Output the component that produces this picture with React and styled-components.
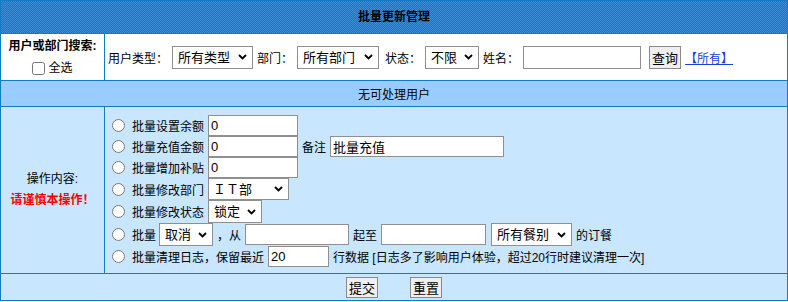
import React from 'react';
import styled, { createGlobalStyle } from 'styled-components';

const GlobalStyle = createGlobalStyle`
  html, body {
    margin: 0;
    padding: 0;
    background: #ffffff;
  }
  body {
    font-family: 'Liberation Sans', 'Noto Sans CJK SC', sans-serif;
    font-size: 12px;
    color: #000;
  }
`;

const BLUE = '#0f7cc4';

const Panel = styled.div`
  width: 788px;
  box-sizing: border-box;
  border: 1px solid ${BLUE};
`;

const Header = styled.div`
  height: 32px;
  line-height: 32px;
  text-align: center;
  font-weight: 700;
  background-color: #2f7fc8;
  background-image: repeating-conic-gradient(#2673bd 0% 25%, #3b8cd4 0% 50%);
  background-size: 2px 2px;
`;

const Row = styled.div`
  display: grid;
  grid-template-columns: 104px 1fr;
  border-top: 1px solid ${BLUE};
  height: ${(p) => p.h}px;
  background: ${(p) => p.bg || '#ffffff'};
`;

const LeftCell = styled.div`
  border-right: 1px solid ${BLUE};
  display: flex;
  flex-direction: column;
  align-items: center;
  justify-content: center;
  line-height: ${(p) => p.lh || 21}px;
  .title {
    font-weight: 700;
  }
  .danger {
    color: #ff0000;
    font-weight: 700;
  }
  label {
    display: flex;
    align-items: center;
  }
  input {
    width: 13px;
    height: 13px;
    margin: 0 3px 0 0;
  }
`;

const RightCell = styled.div`
  display: flex;
  align-items: center;
  padding-left: 3px;
`;

const FullRow = styled.div`
  border-top: 1px solid ${BLUE};
  height: ${(p) => p.h}px;
  background: ${(p) => p.bg};
  display: flex;
  align-items: center;
  justify-content: center;
  gap: ${(p) => p.gap || 0}px;
`;

const OpsList = styled.div`
  display: flex;
  flex-direction: column;
  justify-content: center;
  padding-left: 7px;
  padding-top: 2px;
`;

const OpRow = styled.div`
  display: flex;
  align-items: center;
  min-height: ${(p) => p.h || 21}px;
  white-space: nowrap;
`;

const Radio = styled.input.attrs({ type: 'radio', name: 'op' })`
  width: 13px;
  height: 13px;
  margin: 0 7px 0 0;
`;

const TextInput = styled.input.attrs({ type: 'text' })`
  box-sizing: border-box;
  width: ${(p) => p.w}px;
  height: ${(p) => p.hgt || 21}px;
  margin: 0 4px;
  padding: 0 2px;
  border: 1px solid #8f8f8f;
  border-radius: 0;
  background: #ffffff;
  font-family: 'Liberation Sans', 'Noto Sans CJK SC', sans-serif;
  font-size: 13px;
  color: #000;
  outline: none;
`;

const SelectWrap = styled.span`
  position: relative;
  display: inline-flex;
  margin: 0 4px 0 ${(p) => (p.ml === undefined ? 4 : p.ml)}px;
  width: ${(p) => p.w}px;
  height: ${(p) => p.hgt || 23}px;
  svg {
    position: absolute;
    right: 6px;
    top: 50%;
    transform: translateY(-50%);
    pointer-events: none;
  }
`;

const NativeSelect = styled.select`
  appearance: none;
  -webkit-appearance: none;
  box-sizing: border-box;
  width: 100%;
  height: 100%;
  padding: 0 0 0 ${(p) => p.pl || 5}px;
  border: 1px solid #8f8f8f;
  border-radius: 0;
  background: #ffffff;
  font-family: 'Liberation Sans', 'Noto Sans CJK SC', sans-serif;
  font-size: 13px;
  color: #000;
  outline: none;
`;

const Btn = styled.button`
  box-sizing: border-box;
  height: ${(p) => p.hgt || 22}px;
  padding: 0 2px;
  margin: 0 4px;
  border: 1px solid #8a8a8a;
  border-radius: 0;
  background: #efefef;
  font-family: 'Liberation Sans', 'Noto Sans CJK SC', sans-serif;
  font-size: 13px;
  color: #000;
`;

const AllLink = styled.a`
  color: #1a40d8;
  text-decoration: underline;
`;

const Gap = styled.span`
  display: inline-block;
  width: ${(p) => p.w}px;
`;

const Select = ({ w, hgt, pl, ml, children }) => (
  <SelectWrap w={w} hgt={hgt} ml={ml}>
    <NativeSelect pl={pl} defaultValue={children}>
      <option>{children}</option>
    </NativeSelect>
    <svg width="9" height="6" viewBox="0 0 9 6">
      <path d="M1 1 L4.5 4.5 L8 1" fill="none" stroke="#000" strokeWidth="1.8" />
    </svg>
  </SelectWrap>
);

export default function App() {
  return (
    <>
      <GlobalStyle />
      <Panel>
        <Header>批量更新管理</Header>

        <Row h={46}>
          <LeftCell lh={22}>
            <span className="title">用户或部门搜索:</span>
            <label>
              <input type="checkbox" />
              全选
            </label>
          </LeftCell>
          <RightCell>
            用户类型：
            <Select w={81}>所有类型</Select>
            部门：
            <Select w={82}>所有部门</Select>
            <Gap w={2} />
            状态：
            <Select w={54}>不限</Select>
            姓名：
            <TextInput w={118} hgt={23} />
            <Btn hgt={23}>查询</Btn>
            <AllLink href="#">【所有】</AllLink>
          </RightCell>
        </Row>

        <FullRow h={25} bg="#99ccff">无可处理用户</FullRow>

        <Row h={166} bg="#c8e6fd">
          <LeftCell lh={21}>
            <span>操作内容:</span>
            <span className="danger">请谨慎本操作！</span>
          </LeftCell>
          <OpsList>
            <OpRow>
              <Radio />
              批量设置余额
              <TextInput w={90} defaultValue="0" />
            </OpRow>
            <OpRow>
              <Radio />
              批量充值金额
              <TextInput w={90} defaultValue="0" />
              备注
              <TextInput w={174} defaultValue="批量充值" />
            </OpRow>
            <OpRow>
              <Radio />
              批量增加补贴
              <TextInput w={90} defaultValue="0" />
            </OpRow>
            <OpRow h={22}>
              <Radio />
              批量修改部门
              <Select w={81} hgt={22} pl={4}>ＩＴ部</Select>
            </OpRow>
            <OpRow h={23}>
              <Radio />
              批量修改状态
              <Select w={54} hgt={23}>锁定</Select>
            </OpRow>
            <OpRow h={23}>
              <Radio />
              批量
              <Select w={54} hgt={23} ml={3}>取消</Select>
              ，从
              <TextInput w={104} />
              起至
              <TextInput w={105} />
              <Select w={81} hgt={23} ml={1}>所有餐别</Select>
              的订餐
            </OpRow>
            <OpRow>
              <Radio />
              批量清理日志，保留最近
              <TextInput w={61} defaultValue="20" />
              行数据 [日志多了影响用户体验，超过20行时建议清理一次]
            </OpRow>
          </OpsList>
        </Row>

        <FullRow h={26} bg="#c8e6fd" gap={24}>
          <Btn hgt={21}>提交</Btn>
          <Btn hgt={21}>重置</Btn>
        </FullRow>
      </Panel>
    </>
  );
}
